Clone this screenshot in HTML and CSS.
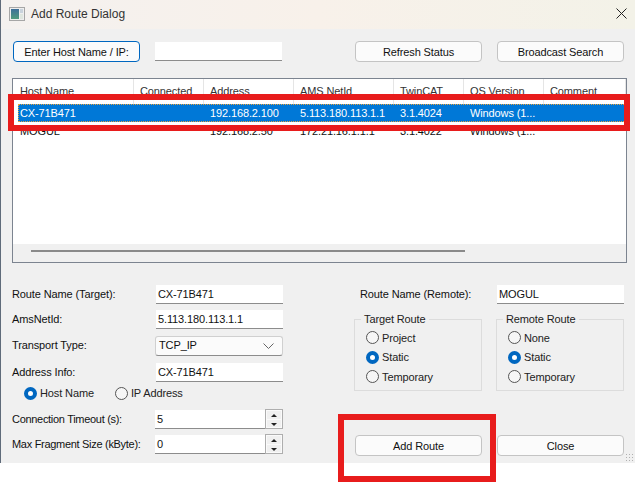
FILE: index.html
```html
<!DOCTYPE html>
<html lang="en">

<head>
    <meta charset="UTF-8">
    <title>Add Route Dialog</title>
    <link rel="stylesheet" href="styles.css">
</head>

<body>
    <div class="dialog">
        <div class="titlebar">
            <svg class="app-icon" width="16" height="14" viewBox="0 0 16 14">
                <defs>
                    <linearGradient id="pane" x1="0" y1="0" x2="0" y2="1">
                        <stop offset="0" stop-color="#3d6f9a" />
                        <stop offset="1" stop-color="#4f9a7c" />
                    </linearGradient>
                </defs>
                <rect x="0.5" y="0.5" width="15" height="13" fill="#eeeeee" stroke="#a6a6a6" />
                <rect x="2" y="2" width="8" height="10" fill="url(#pane)" />
                <rect x="11" y="2" width="3" height="4" fill="#c9d3dc" />
                <rect x="11" y="7" width="3" height="5" fill="#dfe6df" />
            </svg>
            <span class="title">Add Route Dialog</span>
            <svg class="close-x" width="11" height="11" viewBox="0 0 11 11">
                <path d="M0.5 0.5L10.5 10.5M10.5 0.5L0.5 10.5" stroke="#222" fill="none" />
            </svg>
        </div>

        <div class="content">
            <div class="toolbar">
                <button class="btn btn-focus">Enter Host Name / IP:</button>
                <div class="field host-field"></div>
                <button class="btn refresh-btn">Refresh Status</button>
                <button class="btn">Broadcast Search</button>
            </div>

            <div class="list">
                <div class="list-row list-head">
                    <span>Host Name</span><span>Connected</span><span>Address</span><span>AMS NetId</span><span>TwinCAT</span><span>OS Version</span><span>Comment</span>
                </div>
                <div class="list-row selected">
                    <span>CX-71B471</span><span></span><span>192.168.2.100</span><span>5.113.180.113.1.1</span><span>3.1.4024</span><span>Windows (1...</span><span></span>
                </div>
                <div class="list-row">
                    <span>MOGUL</span><span></span><span>192.168.2.50</span><span>172.21.16.1.1.1</span><span>3.1.4022</span><span>Windows (1...</span><span></span>
                </div>
                <div class="list-space"></div>
                <div class="hscroll"><div class="hscroll-thumb"></div></div>
            </div>

            <div class="lower">
                <div class="left-form">
                    <div class="form-row"><label>Route Name (Target):</label><div class="field">CX-71B471</div></div>
                    <div class="form-row ams-row"><label>AmsNetId:</label><div class="field">5.113.180.113.1.1</div></div>
                    <div class="form-row combo-row"><label>Transport Type:</label>
                        <div class="combo"><span>TCP_IP</span>
                            <svg width="11" height="6" viewBox="0 0 11 6"><path d="M0.5 0.5L5.5 5.5L10.5 0.5" stroke="#666" fill="none" /></svg>
                        </div>
                    </div>
                    <div class="form-row"><label>Address Info:</label><div class="field">CX-71B471</div></div>
                    <div class="radio-line">
                        <span class="radio on">Host Name</span>
                        <span class="radio">IP Address</span>
                    </div>
                    <div class="form-row"><label class="tight">Connection Timeout (s):</label>
                        <div class="spin"><div class="field">5</div><div class="spin-btns"><i class="up"></i><i class="down"></i></div></div>
                    </div>
                    <div class="form-row"><label class="tight">Max Fragment Size (kByte):</label>
                        <div class="spin"><div class="field">0</div><div class="spin-btns"><i class="up"></i><i class="down"></i></div></div>
                    </div>
                </div>

                <div class="right-form">
                    <div class="remote-row"><label>Route Name (Remote):</label><div class="field">MOGUL</div></div>
                    <div class="groups">
                        <fieldset class="group">
                            <legend>Target Route</legend>
                            <span class="radio">Project</span>
                            <span class="radio on">Static</span>
                            <span class="radio">Temporary</span>
                        </fieldset>
                        <fieldset class="group">
                            <legend>Remote Route</legend>
                            <span class="radio">None</span>
                            <span class="radio on">Static</span>
                            <span class="radio">Temporary</span>
                        </fieldset>
                    </div>
                    <div class="actions">
                        <button class="btn">Add Route</button>
                        <button class="btn">Close</button>
                    </div>
                </div>
            </div>
            <div class="grip"></div>
        </div>
    </div>

    <!-- red marks drawn on top of the screenshot -->
    <div class="mark mark-row"></div>
    <div class="mark mark-add"></div>
</body>

</html>
```

FILE: styles.css
```css
* {
    box-sizing: border-box;
}

html,
body {
    margin: 0;
    height: 482px;
    overflow: hidden;
    background: white;
}

body {
    position: relative;
    font-family: "Liberation Sans", Arial, sans-serif;
    font-size: 11px;
    letter-spacing: -0.12px;
    color: #111;
}

.dialog {
    height: 463px;
    border-left: 1px solid #5f6b7a;
    display: flex;
    flex-direction: column;
    background: #f0f0f0;
}

.titlebar {
    height: 29px;
    flex: none;
    display: flex;
    align-items: center;
    padding: 0 8px 2px 8px;
    background: linear-gradient(90deg, #f4f1ef 0%, #f8f1ea 50%, #f3f2e8 100%);
}

.app-icon {
    margin-right: 6px;
}

.title {
    flex: 1;
    font-size: 12px;
    letter-spacing: 0;
    color: #333;
}

.content {
    position: relative;
    flex: 1;
    padding: 12px 10px 0 11px;
}

.toolbar {
    display: flex;
    align-items: center;
    height: 21px;
}

.btn {
    width: 127px;
    height: 21px;
    padding: 0;
    border: 1px solid #c4c4c4;
    border-radius: 4px;
    background: #fbfbfb;
    font: inherit;
    letter-spacing: inherit;
    color: #111;
}

.btn-focus {
    margin-left: 1px;
    border-color: #0067c0;
}

.field {
    width: 127px;
    height: 19px;
    flex: none;
    align-self: flex-start;
    padding: 0 2px;
    line-height: 18px;
    background: white;
    border-bottom: 1px solid #8c8c8c;
    white-space: nowrap;
}

.host-field {
    margin-left: 15px;
    align-self: center;
}

.refresh-btn {
    margin-left: 73px;
    margin-right: 15px;
}

.list {
    margin: 16px 0 0 0;
    width: 615px;
    height: 185px;
    display: flex;
    flex-direction: column;
    background: white;
    border: 1px solid #7c8490;
}

.list-row {
    flex: none;
    display: grid;
    grid-template-columns: 120px 70px 90px 100px 70px 80px 1fr;
    height: 18px;
    line-height: 18px;
    white-space: nowrap;
}

.list-row span {
    padding-left: 7px;
}

.list-head {
    height: 25px;
    line-height: 24px;
    grid-template-columns: 121px 70px 90px 100px 70px 80px 1fr;
    color: #333;
}

.list-row.list-head span {
    padding-left: 6px;
    border-right: 1px solid #e5e5e5;
}

.list-row.list-head span:first-child {
    padding-left: 7px;
}

.selected {
    margin-left: 5px;
    grid-template-columns: 115px 70px 90px 100px 70px 80px 1fr;
    color: white;
    background: #0078d7;
    outline: 1px dotted #e8a33d;
    outline-offset: -1px;
}

.list-row.selected span:first-child {
    padding-left: 2px;
}

.list-space {
    flex: 1;
}

.hscroll {
    flex: none;
    height: 18px;
    padding: 6px 0 0 18px;
    background: #f0f0f0;
}

.hscroll-thumb {
    width: 434px;
    height: 2px;
    background: #8a8a8a;
}

.lower {
    display: flex;
    margin-top: 22px;
}

.left-form {
    width: 271px;
}

.form-row {
    display: flex;
    align-items: center;
    justify-content: space-between;
    height: 20px;
    margin-bottom: 5px;
    white-space: nowrap;
}

/* labels sit a pixel above the middle of their row */
.form-row label,
.remote-row label {
    padding-bottom: 2px;
}

.form-row label.tight {
    letter-spacing: -0.3px;
}

.ams-row {
    margin-bottom: 6px;
}

.combo-row {
    margin-bottom: 7px;
}

.combo {
    width: 128px;
    height: 20px;
    padding: 0 8px 0 3px;
    display: flex;
    align-items: center;
    justify-content: space-between;
    background: #fbfbfb;
    border: 1px solid #d0d0d0;
    border-bottom-color: #8c8c8c;
    border-radius: 3px;
}

.combo span {
    padding-bottom: 2px;
}

.radio-line {
    display: flex;
    gap: 21px;
    height: 20px;
    padding-left: 12px;
    margin: -5px 0 7px 0;
    align-items: center;
}

.radio {
    display: flex;
    align-items: center;
    gap: 3px;
    height: 19.5px;
    color: #222;
}

.radio::before {
    content: "";
    box-sizing: border-box;
    width: 13px;
    height: 13px;
    flex: none;
    border-radius: 50%;
    background: #f6f6f6;
    border: 1px solid #555;
}

.radio.on::before {
    background: white;
    border: 4px solid #0067c0;
}

.spin {
    width: 128px;
    height: 20px;
    display: flex;
}

.spin .field {
    width: 110px;
}

.spin-btns {
    width: 18px;
    height: 20px;
    margin-top: -1px;
    display: flex;
    flex-direction: column;
    border: 1px solid #aeaeae;
    background: #fafafa;
    padding: 1px;
    gap: 1px;
}

.spin-btns i {
    flex: 1;
    position: relative;
    background: #f0f0f0;
}

.spin-btns i::after {
    content: "";
    position: absolute;
    left: 4px;
    top: 3px;
    border-left: 3px solid transparent;
    border-right: 3px solid transparent;
}

.spin-btns .up::after {
    border-bottom: 3px solid #222;
}

.spin-btns .down::after {
    border-top: 3px solid #222;
}

.right-form {
    margin-left: 72px;
    width: 269px;
}

.remote-row {
    display: flex;
    align-items: center;
    justify-content: space-between;
    height: 20px;
    padding-left: 5px;
}

.groups {
    display: flex;
    justify-content: space-between;
    margin: 7px 0 0 -1px;
}

.group {
    width: 128px;
    height: 79px;
    margin: 0;
    padding: 2px 0 0 11px;
    border: 1px solid #dcdcdc;
    display: flex;
    flex-direction: column;
    color: #222;
}

.group legend {
    padding: 0 3px;
    margin-left: -5px;
    line-height: 14px;
}

.actions {
    display: flex;
    justify-content: space-between;
    margin-top: 44px;
}

.grip {
    position: absolute;
    right: 2px;
    bottom: 2px;
    width: 8px;
    height: 8px;
    background: radial-gradient(circle, #b0b0b0 1px, transparent 1px) 0 0 / 3px 3px;
}

.mark {
    position: absolute;
    border: 6px solid #e81c1c;
}

.mark-row {
    left: 8px;
    top: 94px;
    width: 622px;
    height: 37px;
}

.mark-add {
    left: 338px;
    top: 414px;
    width: 158px;
    height: 68px;
}
```
